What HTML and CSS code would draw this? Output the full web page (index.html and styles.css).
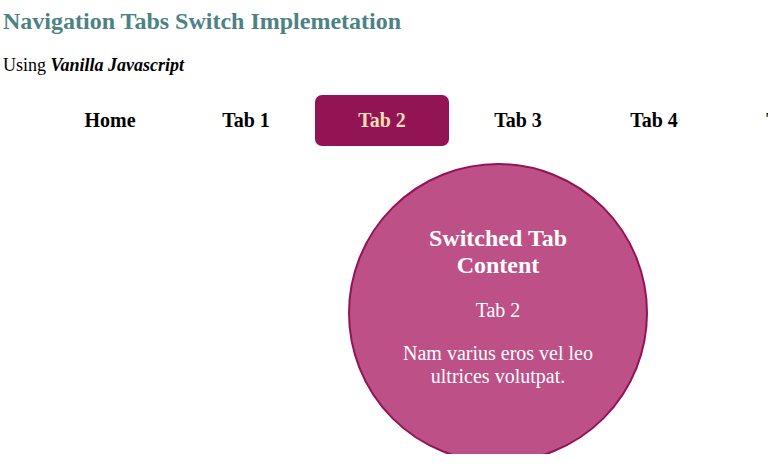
FILE: index.html
```html
<!DOCTYPE html>
<html lang="en">
<head>
<meta charset="utf-8">
<title>Navigation Tabs</title>
<link rel="stylesheet" href="styles.css">
</head>
<body>
<header>
<h2 class="title">Navigation Tabs Switch Implemetation</h2>
<p class="subtitle">Using <strong><em>Vanilla Javascript</em></strong></p>
</header>
<main class="viewport">
<nav>
<ul class="tabs">
<li><a class="tab" href="#home">Home</a></li>
<li><a class="tab" href="#tab1">Tab 1</a></li>
<li><a class="tab active" href="#tab2" aria-current="page">Tab 2</a></li>
<li><a class="tab" href="#tab3">Tab 3</a></li>
<li><a class="tab" href="#tab4">Tab 4</a></li>
<li><a class="tab" href="#tab5">Tab 5</a></li>
</ul>
</nav>
<div class="stage">
<section class="content">
<h2>Switched Tab Content</h2>
<p>Tab 2</p>
<p>Nam varius eros vel leo ultrices volutpat.</p>
</section>
</div>
</main>
</body>
</html>
```
FILE: styles.css
```css
* {
  box-sizing: border-box;
}

html {
  overflow: hidden;
}

body {
  height: 100vh;
  margin: 0;
  padding: 8px 0 17px 3px;
  display: flex;
  flex-direction: column;
  font-family: "Liberation Serif", serif;
  font-size: 18px;
  line-height: 21px;
  color: #000;
  background: #fff;
}

.title {
  margin: 0 0 20px;
  font-size: 24px;
  line-height: 27px;
  color: #4c8285;
}

.subtitle {
  margin: 0 0 19px;
}

.viewport {
  flex: 1;
  min-height: 0;
  overflow: hidden;
}

.tabs {
  display: flex;
  gap: 2px;
  margin: 0 0 17px;
  padding: 0 0 0 40px;
  list-style: none;
}

.tab {
  display: block;
  width: 134px;
  padding: 15px 0;
  border-radius: 7px;
  font-size: 20px;
  font-weight: bold;
  text-align: center;
  text-decoration: none;
  color: #000;
}

.active {
  color: #f5deb3;
  background: #931455;
}

.stage {
  display: flex;
  justify-content: center;
  min-width: 990px;
}

.content {
  width: 300px;
  height: 300px;
  padding: 60px 50px;
  border: 2px solid #931455;
  border-radius: 50%;
  font-size: 20px;
  line-height: 23px;
  text-align: center;
  color: #fff;
  background: #bd5087;
}

.content h2 {
  margin: 0 0 20px;
  font-size: 24px;
  line-height: 27px;
}

.content p {
  margin: 0 0 20px;
}
```
